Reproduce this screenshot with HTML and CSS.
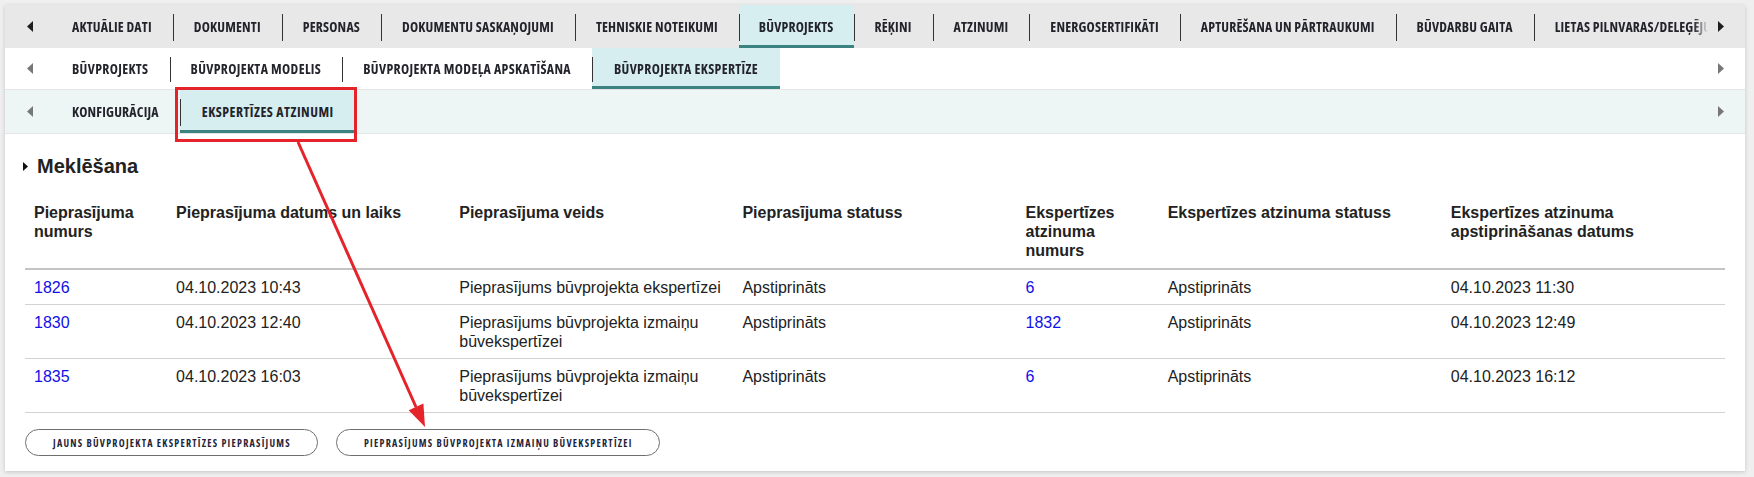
FILE: index.html
```html
<!DOCTYPE html>
<html lang="lv">
<head>
<meta charset="utf-8">
<title>Būvprojekta ekspertīze</title>
<link rel="stylesheet" href="styles.css">
</head>
<body>
<div class="card">
  <nav class="tabbar tabbar-main">
    <span class="scroll-arrow left"><svg width="6" height="11" viewBox="0 0 6 11"><path d="M6 0L0 5.5L6 11Z"/></svg></span>
    <div class="tabs">
      <a class="tab">AKTUĀLIE DATI</a>
      <a class="tab">DOKUMENTI</a>
      <a class="tab">PERSONAS</a>
      <a class="tab">DOKUMENTU SASKAŅOJUMI</a>
      <a class="tab">TEHNISKIE NOTEIKUMI</a>
      <a class="tab active">BŪVPROJEKTS</a>
      <a class="tab">RĒĶINI</a>
      <a class="tab">ATZINUMI</a>
      <a class="tab">ENERGOSERTIFIKĀTI</a>
      <a class="tab">APTURĒŠANA UN PĀRTRAUKUMI</a>
      <a class="tab">BŪVDARBU GAITA</a>
      <a class="tab">LIETAS PILNVARAS/DELEĢĒJUMI</a>
    </div>
    <span class="scroll-arrow right"><svg width="6" height="11" viewBox="0 0 6 11"><path d="M0 0L6 5.5L0 11Z"/></svg></span>
  </nav>
  <nav class="tabbar tabbar-sub">
    <span class="scroll-arrow left"><svg width="6" height="11" viewBox="0 0 6 11"><path d="M6 0L0 5.5L6 11Z"/></svg></span>
    <div class="tabs">
      <a class="tab">BŪVPROJEKTS</a>
      <a class="tab">BŪVPROJEKTA MODELIS</a>
      <a class="tab">BŪVPROJEKTA MODEĻA APSKATĪŠANA</a>
      <a class="tab active">BŪVPROJEKTA EKSPERTĪZE</a>
    </div>
    <span class="scroll-arrow right"><svg width="6" height="11" viewBox="0 0 6 11"><path d="M0 0L6 5.5L0 11Z"/></svg></span>
  </nav>
  <nav class="tabbar tabbar-third">
    <span class="scroll-arrow left"><svg width="6" height="11" viewBox="0 0 6 11"><path d="M6 0L0 5.5L6 11Z"/></svg></span>
    <div class="tabs">
      <a class="tab">KONFIGURĀCIJA</a>
      <a class="tab active">EKSPERTĪZES ATZINUMI</a>
    </div>
    <span class="scroll-arrow right"><svg width="6" height="11" viewBox="0 0 6 11"><path d="M0 0L6 5.5L0 11Z"/></svg></span>
  </nav>

  <main class="content">
    <h2 class="section-title"><svg class="caret" width="5" height="9" viewBox="0 0 5 9"><path d="M0 0L5 4.5L0 9Z"/></svg>Meklēšana</h2>
    <table class="results">
      <colgroup>
        <col class="c-narrow"><col class="c-wide"><col class="c-wide"><col class="c-wide"><col class="c-narrow"><col class="c-wide"><col class="c-wide">
      </colgroup>
      <thead>
        <tr>
          <th>Pieprasījuma numurs</th>
          <th>Pieprasījuma datums un laiks</th>
          <th>Pieprasījuma veids</th>
          <th>Pieprasījuma statuss</th>
          <th>Ekspertīzes atzinuma numurs</th>
          <th>Ekspertīzes atzinuma statuss</th>
          <th>Ekspertīzes atzinuma apstiprināšanas datums</th>
        </tr>
      </thead>
      <tbody>
        <tr>
          <td><a class="link">1826</a></td>
          <td>04.10.2023 10:43</td>
          <td>Pieprasījums būvprojekta ekspertīzei</td>
          <td>Apstiprināts</td>
          <td><a class="link">6</a></td>
          <td>Apstiprināts</td>
          <td>04.10.2023 11:30</td>
        </tr>
        <tr>
          <td><a class="link">1830</a></td>
          <td>04.10.2023 12:40</td>
          <td>Pieprasījums būvprojekta izmaiņu būvekspertīzei</td>
          <td>Apstiprināts</td>
          <td><a class="link">1832</a></td>
          <td>Apstiprināts</td>
          <td>04.10.2023 12:49</td>
        </tr>
        <tr>
          <td><a class="link">1835</a></td>
          <td>04.10.2023 16:03</td>
          <td>Pieprasījums būvprojekta izmaiņu būvekspertīzei</td>
          <td>Apstiprināts</td>
          <td><a class="link">6</a></td>
          <td>Apstiprināts</td>
          <td>04.10.2023 16:12</td>
        </tr>
      </tbody>
    </table>
    <div class="actions">
      <button class="pill">JAUNS BŪVPROJEKTA EKSPERTĪZES PIEPRASĪJUMS</button>
      <button class="pill">PIEPRASĪJUMS BŪVPROJEKTA IZMAIŅU BŪVEKSPERTĪZEI</button>
    </div>
  </main>
</div>

<svg class="annotation" width="1754" height="477" viewBox="0 0 1754 477">
  <rect x="176.5" y="88.5" width="179" height="52" fill="none" stroke="#e5232a" stroke-width="3"/>
  <line x1="298" y1="142" x2="416" y2="407" stroke="#e5232a" stroke-width="3"/>
  <polygon points="408.7,410.2 423.4,403.6 425,427" fill="#e5232a"/>
</svg>
</body>
</html>
```

FILE: styles.css
```css
* { box-sizing: border-box; }

body {
  margin: 0;
  background: #efefef;
  font-family: "Liberation Sans", Arial, sans-serif;
  color: #222;
  position: relative;
  width: 1754px;
  height: 477px;
  overflow: hidden;
}

.card {
  margin: 5px 9px 0 5px;
  height: 466px;
  background: #fff;
  box-shadow: 0 1px 4px rgba(0, 0, 0, 0.18);
  display: flex;
  flex-direction: column;
}

/* ---------- tab bars ---------- */
.tabbar {
  display: flex;
  align-items: stretch;
  flex: none;
}
.tabbar-main { height: 43px; background: #e8e8e8; }
.tabbar-sub { height: 42px; background: #fff; border-bottom: 1px solid #e4e4e4; }
.tabbar-third { height: 44px; background: #eef6f5; border-bottom: 1px solid #e2e6e6; }

.scroll-arrow {
  flex: none;
  display: flex;
  align-items: center;
}
.scroll-arrow.left { width: 46px; padding-left: 22px; }
.scroll-arrow.right { width: 37px; padding-left: 10px; }
.scroll-arrow svg { fill: #777; }
.tabbar-main .scroll-arrow svg { fill: #1e1e1e; }

.tabs {
  flex: 1;
  display: flex;
  overflow: hidden;
  white-space: nowrap;
  -webkit-mask-image: linear-gradient(to right, #000 calc(100% - 14px), transparent);
  mask-image: linear-gradient(to right, #000 calc(100% - 14px), transparent);
}

.tab {
  position: relative;
  display: flex;
  align-items: center;
  padding: 3px 21px 0 21px;
  font-family: "Open Sans", "Liberation Sans", sans-serif;
  font-stretch: 75%;
  font-weight: 700;
  font-size: 13.8px;
  letter-spacing: 0.18px;
  color: #23232b;
  border-bottom: 3px solid transparent;
}
.tabbar-sub .tab { letter-spacing: 0.35px; }
.tab + .tab::before {
  content: "";
  position: absolute;
  left: 0;
  top: 9px;
  bottom: 4px;
  width: 1px;
  background: #333;
}
.tab.active {
  background: #d6eef0;
  border-bottom-color: #3a8381;
  padding: 3px 20px 0 20px;
}
.tabbar-sub .tab.active { padding: 3px 22px 0 22px; }
.tabbar-third .tab.active { padding: 3px 22px 0 22px; letter-spacing: 0.5px; }

/* ---------- content ---------- */
.content {
  padding: 0 20px;
}

.section-title {
  margin: 21px 0 17px -2px;
  font-size: 20px;
  line-height: 23px;
  font-weight: bold;
  color: #222;
  display: flex;
  align-items: center;
  gap: 9px;
}
.caret { fill: #111; }

.results {
  width: 1700px;
  table-layout: fixed;
  border-collapse: collapse;
  font-size: 16px;
  line-height: 19px;
}
.c-narrow { width: 142px; }
.c-wide { width: 283px; }

.results th {
  text-align: left;
  vertical-align: top;
  font-weight: bold;
  padding: 8px 9px 8px 9px;
  border-bottom: 2px solid #c4c4c4;
}
.results td {
  vertical-align: top;
  padding: 8px 9px 7px 9px;
  border-bottom: 1px solid #d2d2d2;
}
.link { color: #1010e8; text-decoration: none; }

.actions {
  display: flex;
  gap: 18px;
  margin-top: 16px;
}
.pill {
  height: 27px;
  padding: 0 26px 0 27px;
  border: 1px solid #6f6f6f;
  border-radius: 14px;
  background: #fff;
  font-family: "Open Sans", "Liberation Sans", sans-serif;
  font-stretch: 75%;
  font-weight: 700;
  font-size: 10px;
  letter-spacing: 1.25px;
  color: #1f1f3a;
}

.annotation {
  position: absolute;
  left: 0;
  top: 0;
  pointer-events: none;
}
```
